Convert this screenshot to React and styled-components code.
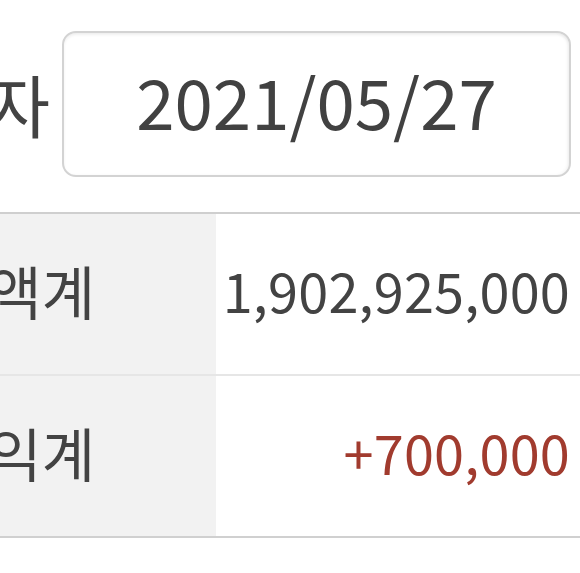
import styled, { createGlobalStyle } from 'styled-components';

const GlobalStyle = createGlobalStyle`
  html, body {
    margin: 0;
    padding: 0;
    background: #fff;
    overflow: hidden;
  }
  body {
    font-family: "Noto Sans CJK KR", "Noto Sans", sans-serif;
    color: #434343;
  }
`;

const rows = [
  { label: '평가금액계', value: '1,902,925,000' },
  { label: '평가손익계', value: '+700,000', profit: true },
];

export default () => (
  <Viewport>
    <GlobalStyle />
    <Screen>
      {/* date picker */}
      <DateRow>
        <DateLabel>기준일자</DateLabel>
        <DateInput>2021/05/27</DateInput>
      </DateRow>

      {/* summary table */}
      <Table>
        {rows.map((row) => (
          <Row key={row.label}>
            <LabelCell>{row.label}</LabelCell>
            <ValueCell $profit={row.profit}>{row.value}</ValueCell>
          </Row>
        ))}
      </Table>
    </Screen>
  </Viewport>
);

const Viewport = styled.div`
  width: 580px;
  height: 573px;
  overflow: hidden;
`;

const Screen = styled.div`
  width: calc(100% + 307px);
  margin-left: -307px;
`;

const DateRow = styled.div`
  display: flex;
  align-items: center;
  padding-top: 31px;
`;

const DateLabel = styled.div`
  flex: none;
  width: 357px;
  text-align: right;
  font-size: 68px;
  line-height: 1;
  white-space: nowrap;
`;

const DateInput = styled.div`
  flex: 1;
  display: flex;
  align-items: center;
  justify-content: center;
  box-sizing: border-box;
  height: 146px;
  margin: 0 9px 0 12px;
  padding-bottom: 8px;
  border: 2px solid #d3d3d3;
  border-radius: 14px;
  box-shadow: inset 0 2px 3px rgba(0, 0, 0, 0.06), inset -2px 0 3px rgba(0, 0, 0, 0.04);
  font-size: 69px;
  line-height: 1;
  color: #414141;
`;

const Table = styled.div`
  margin-top: 35px;
  border-top: 2px solid #cfcfcf;
  border-bottom: 2px solid #d0d0d0;
`;

const Row = styled.div`
  display: flex;
  height: 160px;

  & + & {
    border-top: 2px solid #e6e6e6;
  }
`;

const LabelCell = styled.div`
  flex: none;
  width: 523px;
  display: flex;
  align-items: center;
  justify-content: flex-end;
  padding: 0 121px 8px 0;
  box-sizing: border-box;
  background: #f2f2f2;
  font-size: 58px;
  line-height: 1;
  white-space: nowrap;
`;

const ValueCell = styled.div`
  flex: 1;
  display: flex;
  align-items: center;
  justify-content: flex-end;
  box-sizing: border-box;
  padding: 0 10px 8px 0;
  font-size: 54px;
  letter-spacing: 0.2px;
  line-height: 1;
  white-space: nowrap;
  color: ${(p) => (p.$profit ? '#a13b2e' : '#434343')};
`;
